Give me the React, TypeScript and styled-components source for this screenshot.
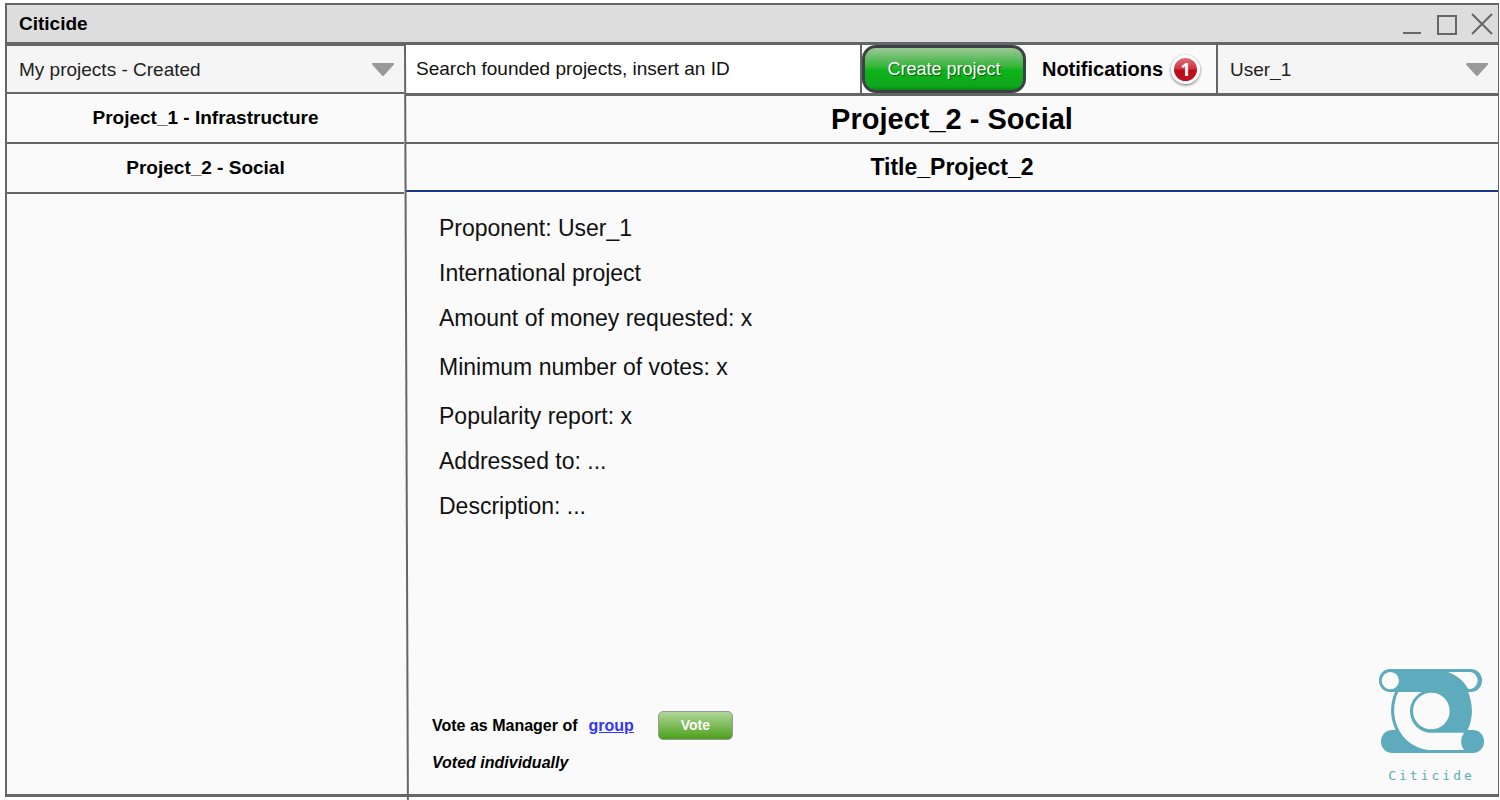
import React from "react";
import styled, { createGlobalStyle, css } from "styled-components";

const LINE = "#666666";
const TEAL = "#5eabbd";
const PAPER = "#fafafa";

const GlobalStyle = createGlobalStyle`
  *, *::before, *::after { box-sizing: border-box; }
  body { margin: 0; background: #ffffff; }
  body, button, input, select { font-family: "Liberation Sans", Arial, sans-serif; color: #000; }
  h1, h2, p, ul { margin: 0; padding: 0; }
`;

const Page = styled.div`
  min-height: 100vh;
  padding: 3px 1px 3px 5px;
  display: flex;
`;

const Window = styled.div`
  flex: 1;
  display: flex;
  flex-direction: column;
  border: 2px solid ${LINE};
  border-bottom-width: 3px;
  border-right-width: 1px;
  background: ${PAPER};
`;

const TitleBar = styled.header`
  display: flex;
  align-items: center;
  justify-content: space-between;
  height: 40px;
  padding: 0 4px 0 12px;
  background: #dddddd;
  border-bottom: 3px solid ${LINE};
`;

const AppName = styled.strong`
  font-size: 19px;
  line-height: 22px;
`;

const WindowControls = styled.div`
  display: flex;
  gap: 12px;
`;

const ControlButton = styled.button`
  display: block;
  padding: 0;
  border: 0;
  background: none;
  line-height: 0;
`;

const Columns = styled.div`
  flex: 1;
  display: flex;
`;

const Sidebar = styled.nav`
  flex: 0 0 397px;
  display: flex;
  flex-direction: column;
`;

/* Slightly tilted, and runs past the bottom of the window frame. */
const Divider = styled.div`
  flex: 0 0 2px;
  margin-bottom: -6px;
  background: ${LINE};
  transform: skewX(0.22deg);
  transform-origin: top;
  z-index: 1;
`;

const Main = styled.main`
  flex: 1;
  min-width: 0;
  display: flex;
  flex-direction: column;
`;

const SelectBox = styled.div<{ $width?: string }>`
  position: relative;
  display: flex;
  flex: ${(p) => (p.$width ? `0 0 ${p.$width}` : "none")};
  background: #f5f5f5;
`;

const Select = styled.select`
  flex: 1;
  appearance: none;
  border: 0;
  padding: 0 40px 0 12px;
  background: transparent;
  font-size: 19px;
  color: #222;
`;

const Arrow = styled.svg`
  position: absolute;
  right: 9px;
  top: 50%;
  margin-top: -6px;
  pointer-events: none;
`;

const ProjectFilter = styled.div`
  display: flex;
  height: 49px;
  border: 2px solid ${LINE};
  border-width: 1px 0 2px 0;

  & > ${SelectBox} { flex: 1; }
`;

const ProjectList = styled.ul`
  list-style: none;
`;

const ProjectItem = styled.li`
  height: 50px;
  border-bottom: 2px solid ${LINE};
`;

const ProjectLink = styled.a`
  display: block;
  color: #000;
  text-align: center;
  text-decoration: none;
  font-size: 19px;
  font-weight: bold;
  line-height: 48px;
`;

const Toolbar = styled.div`
  display: flex;
  height: 51px;
  border-bottom: 3px solid ${LINE};
`;

const SearchInput = styled.input`
  flex: 1;
  min-width: 0;
  border: 0;
  border-right: 2px solid ${LINE};
  padding: 0 10px;
  background: #fff;
  font-size: 19px;

  &::placeholder { color: #111; opacity: 1; }
`;

const glossy = css`
  color: #fff;
  cursor: pointer;
`;

const CreateButton = styled.button`
  ${glossy}
  flex: 0 0 164px;
  border: 3px solid #3c4148;
  border-radius: 14px;
  background: linear-gradient(#9cc895 0%, #5cbb5c 28%, #2ab52f 48%, #0db41a 52%, #0fa61c 90%, #0a8a14 100%);
  font-size: 18px;
  text-shadow: 1px 1px 1px rgba(0, 0, 0, 0.5);
`;

const Notifications = styled.div`
  flex: 0 0 192px;
  display: flex;
  align-items: center;
  justify-content: center;
  gap: 8px;
  border-right: 2px solid ${LINE};
  font-size: 20px;
  font-weight: bold;
`;

const Badge = styled.span`
  width: 29px;
  height: 29px;
  border: 3px solid #fff;
  border-radius: 50%;
  background: linear-gradient(#dc6f78 0%, #cf3040 48%, #bd0a18 52%, #c01020 100%);
  box-shadow: 0 1px 3px rgba(0, 0, 0, 0.6);
  color: #fff;
  font-family: "Open Sans", sans-serif;
  font-size: 18px;
  line-height: 22px;
  text-align: center;
`;

const ProjectHeading = styled.h1`
  border-bottom: 2px solid ${LINE};
  font-size: 29px;
  line-height: 46px;
  text-align: center;
`;

const ProjectTitle = styled.h2`
  border-bottom: 2px solid #1c3687;
  font-size: 23px;
  line-height: 46px;
  text-align: center;
`;

const Body = styled.section`
  flex: 1;
  display: flex;
  flex-direction: column;
  justify-content: space-between;
  padding: 14px 14px 9px 26px;
`;

const Details = styled.div`
  display: flex;
  flex-direction: column;
  gap: 4px;
  padding-left: 7px;
  font-size: 23px;
  line-height: 45px;
  color: #111;
`;

const Footer = styled.footer`
  display: flex;
  align-items: flex-end;
  justify-content: space-between;
`;

const VotePanel = styled.div`
  display: flex;
  flex-direction: column;
  gap: 12px;
  padding-bottom: 11px;
  font-size: 16px;
  font-weight: bold;
`;

const VoteRow = styled.div`
  display: flex;
  align-items: center;
`;

const GroupLink = styled.a`
  margin: 0 24px 0 11px;
  color: #3333ff;
`;

const VoteButton = styled.button`
  ${glossy}
  width: 75px;
  height: 29px;
  padding: 0 0 2px;
  border: 1px solid #999;
  border-radius: 5px;
  background: linear-gradient(#b0d69a, #4ca01a);
  font-size: 14px;
  font-weight: bold;
`;

const VoteStatus = styled.p`
  font-style: italic;
  line-height: 22px;
`;

const Brand = styled.div`
  display: flex;
  flex-direction: column;
  align-items: center;
  gap: 14px;
  color: ${TEAL};
  font-family: "DejaVu Sans Mono", monospace;
  font-size: 13px;
  line-height: 18px;
  letter-spacing: 3px;
`;

const DropArrow = () => (
  <Arrow width="24" height="14" viewBox="0 0 24 14" aria-hidden="true">
    <path d="M2 1h20l-10 11z" fill="#999" stroke="#999" strokeWidth="2" strokeLinejoin="round" />
  </Arrow>
);

const Logo = () => (
  <svg width="105" height="84" viewBox="57 54 315 252" aria-hidden="true">
    <g fill={TEAL}>
      <rect x="63" y="237" width="309" height="69" rx="34" />
      <rect x="57" y="54" width="309" height="69" rx="34" />
      <path d="M105 123C88 160 90 205 107 237H323C340 200 340 160 323 119Z" />
    </g>
    <g fill={PAPER}>
      <path d="M264 63H332A26 26 0 0 1 332 114H325Q305 78 264 63Z" />
      <path d="M115 123C82 190 115 285 205 297H312Q294 271 312 245H205C165 238 150 205 150 180C150 155 165 135 185 123Z" />
      <circle cx="214" cy="180" r="55" />
      <circle cx="91" cy="89" r="26" />
    </g>
  </svg>
);

const detailGroups = [
  ["Proponent: User_1", "International project", "Amount of money requested: x"],
  ["Minimum number of votes: x"],
  ["Popularity report: x", "Addressed to: ...", "Description: ..."],
];

export default function App() {
  return (
    <>
      <GlobalStyle />
      <Page>
        <Window>
          <TitleBar>
            <AppName>Citicide</AppName>
            <WindowControls>
              <ControlButton aria-label="Minimize">
                <svg width="22" height="24"><path d="M3 21h18" stroke={LINE} strokeWidth="2" /></svg>
              </ControlButton>
              <ControlButton aria-label="Maximize">
                <svg width="24" height="24"><path d="M4 4h18v18H4z" fill="none" stroke={LINE} strokeWidth="2" /></svg>
              </ControlButton>
              <ControlButton aria-label="Close">
                <svg width="24" height="24"><path d="M2 2l20 20M22 2L2 22" stroke={LINE} strokeWidth="2" /></svg>
              </ControlButton>
            </WindowControls>
          </TitleBar>
          <Columns>
            <Sidebar>
              <ProjectFilter>
                <SelectBox>
                  <Select aria-label="Project filter">
                    <option>My projects - Created</option>
                  </Select>
                  <DropArrow />
                </SelectBox>
              </ProjectFilter>
              <ProjectList>
                <ProjectItem><ProjectLink href="#project-1">Project_1 - Infrastructure</ProjectLink></ProjectItem>
                <ProjectItem><ProjectLink href="#project-2">Project_2 - Social</ProjectLink></ProjectItem>
              </ProjectList>
            </Sidebar>
            <Divider />
            <Main>
              <Toolbar>
                <SearchInput type="text" aria-label="Search projects" placeholder="Search founded projects, insert an ID" />
                <CreateButton type="button">Create project</CreateButton>
                <Notifications>
                  Notifications <Badge>1</Badge>
                </Notifications>
                <SelectBox $width="280px">
                  <Select aria-label="User">
                    <option>User_1</option>
                  </Select>
                  <DropArrow />
                </SelectBox>
              </Toolbar>
              <ProjectHeading>Project_2 - Social</ProjectHeading>
              <ProjectTitle>Title_Project_2</ProjectTitle>
              <Body>
                <Details>
                  {detailGroups.map((group) => (
                    <div key={group[0]}>
                      {group.map((line) => (
                        <p key={line}>{line}</p>
                      ))}
                    </div>
                  ))}
                </Details>
                <Footer>
                  <VotePanel>
                    <VoteRow>
                      Vote as Manager of
                      <GroupLink href="#group">group</GroupLink>
                      <VoteButton type="button">Vote</VoteButton>
                    </VoteRow>
                    <VoteStatus>Voted individually</VoteStatus>
                  </VotePanel>
                  <Brand>
                    <Logo />
                    <span>Citicide</span>
                  </Brand>
                </Footer>
              </Body>
            </Main>
          </Columns>
        </Window>
      </Page>
    </>
  );
}
